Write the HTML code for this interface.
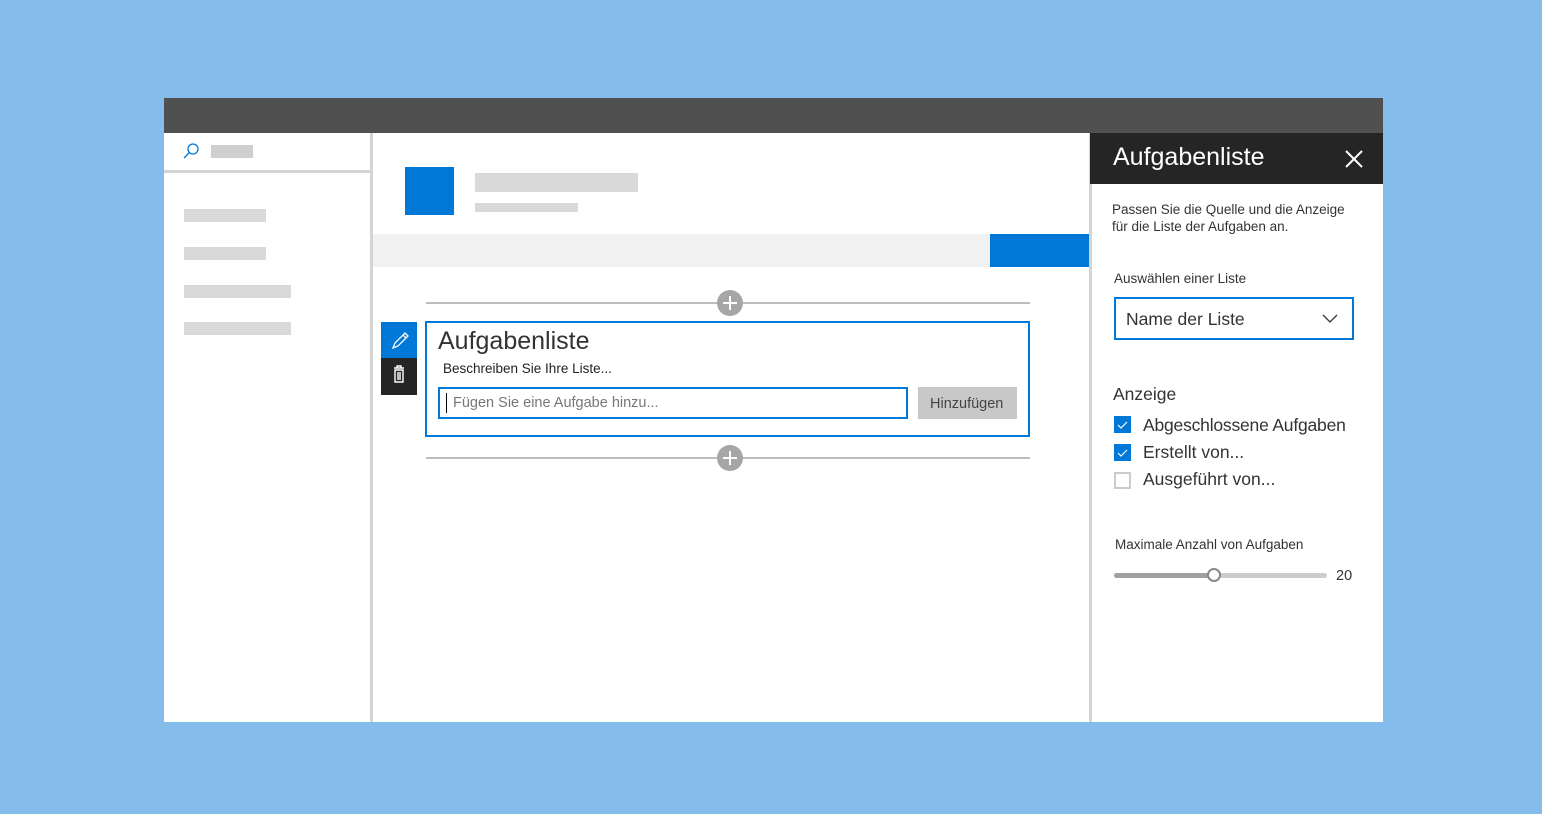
<!DOCTYPE html><html><head><style>
*{margin:0;padding:0;box-sizing:border-box}
body{width:1542px;height:814px;background:#84bdeb;position:relative;overflow:hidden;font-family:"Liberation Sans",sans-serif}
.a{position:absolute}
.g{background:#d9d9d9;position:absolute}
.t{position:absolute;white-space:nowrap}
</style></head><body>
<div class="a" style="left:164px;top:98px;width:1219px;height:624px;background:#fff"></div>
<div class="a" style="left:164px;top:98px;width:1219px;height:35px;background:#505050"></div>
<div class="a" style="left:370px;top:133px;width:3px;height:589px;background:#d4d4d4"></div>
<div class="a" style="left:164px;top:170px;width:206px;height:3px;background:#d4d4d4"></div>
<svg class="a" style="left:182px;top:141px" width="20" height="20"><circle cx="11" cy="8" r="5" fill="none" stroke="#0078d7" stroke-width="1.3"/><line x1="7.5" y1="11.5" x2="2" y2="17" stroke="#0078d7" stroke-width="1.3"/></svg>
<div class="a" style="left:211px;top:145px;width:42px;height:13px;background:#cfcfcf"></div>
<div class="g" style="left:184px;top:209px;width:82px;height:13px"></div>
<div class="g" style="left:184px;top:247px;width:82px;height:13px"></div>
<div class="g" style="left:184px;top:285px;width:107px;height:13px"></div>
<div class="g" style="left:184px;top:322px;width:107px;height:13px"></div>
<div class="a" style="left:405px;top:167px;width:49px;height:48px;background:#0078d7"></div>
<div class="g" style="left:475px;top:173px;width:163px;height:19px"></div>
<div class="g" style="left:475px;top:203px;width:103px;height:9px"></div>
<div class="a" style="left:373px;top:234px;width:617px;height:33px;background:#f1f1f1"></div>
<div class="a" style="left:990px;top:234px;width:99px;height:33px;background:#0078d7"></div>
<div class="a" style="left:426px;top:302px;width:604px;height:2px;background:#bdbdbd"></div>
<div class="a" style="left:426px;top:457px;width:604px;height:2px;background:#bdbdbd"></div>
<svg class="a" style="left:716px;top:289px" width="28" height="28"><circle cx="14" cy="14" r="13" fill="#a6a6a6"/><path d="M14 7v14M7 14h14" stroke="#fff" stroke-width="2"/></svg>
<svg class="a" style="left:716px;top:444px" width="28" height="28"><circle cx="14" cy="14" r="13" fill="#a6a6a6"/><path d="M14 7v14M7 14h14" stroke="#fff" stroke-width="2"/></svg>
<div class="a" style="left:381px;top:322px;width:36px;height:36px;background:#0078d7"></div>
<div class="a" style="left:381px;top:358px;width:36px;height:37px;background:#252525"></div>
<svg class="a" style="left:381px;top:322px" width="36" height="73"><path d="M12 26l2-5 10-10 3 3-10 10z M22 13l3 3" fill="none" stroke="#fff" stroke-width="1.3"/><path d="M13 46h10M16 46v-2h4v2M14 48h8v12h-8z M17 50v8M19 50v8" fill="none" stroke="#fff" stroke-width="1.4"/></svg>
<div class="a" style="left:425px;top:321px;width:605px;height:116px;border:2px solid #0078d7"></div>
<div class="t" style="left:438px;top:327px;font-size:25px;color:#333">Aufgabenliste</div>
<div class="t" style="left:443px;top:361px;font-size:13.5px;color:#222">Beschreiben Sie Ihre Liste...</div>
<div class="a" style="left:438px;top:387px;width:470px;height:32px;border:2px solid #0078d7"></div>
<div class="a" style="left:446px;top:393px;width:1px;height:20px;background:#000"></div>
<div class="t" style="left:453px;top:395px;font-size:14.5px;color:#777">Fügen Sie eine Aufgabe hinzu...</div>
<div class="a" style="left:918px;top:387px;width:99px;height:32px;background:#c8c8c8"></div>
<div class="t" style="left:930px;top:396px;font-size:14.5px;color:#444">Hinzufügen</div>
<div class="a" style="left:1089px;top:133px;width:3px;height:589px;background:#d4d4d4"></div>
<div class="a" style="left:1090px;top:133px;width:293px;height:51px;background:#252525"></div>
<div class="t" style="left:1113px;top:143px;font-size:25px;color:#fff">Aufgabenliste</div>
<svg class="a" style="left:1344px;top:149px" width="20" height="20"><path d="M2 2l16 16M18 2L2 18" stroke="#fff" stroke-width="2"/></svg>
<div class="t" style="left:1112px;top:201px;font-size:13.5px;line-height:17px;color:#333">Passen Sie die Quelle und die Anzeige<br>für die Liste der Aufgaben an.</div>
<div class="t" style="left:1114px;top:271px;font-size:13.5px;color:#333">Auswählen einer Liste</div>
<div class="a" style="left:1114px;top:297px;width:240px;height:43px;border:2px solid #0078d7"></div>
<div class="t" style="left:1126px;top:309px;font-size:17.5px;color:#333">Name der Liste</div>
<svg class="a" style="left:1322px;top:313px" width="16" height="10"><path d="M1 2l7 7 7-7" fill="none" stroke="#333" stroke-width="1.3"/></svg>
<div class="t" style="left:1113px;top:384px;font-size:17.5px;color:#333">Anzeige</div>
<div class="a" style="left:1114px;top:416px;width:17px;height:17px;background:#0078d7"></div>
<div class="a" style="left:1114px;top:444px;width:17px;height:17px;background:#0078d7"></div>
<svg class="a" style="left:1114px;top:416px" width="17" height="45"><path d="M4 9l3 3 6-6M4 37l3 3 6-6" fill="none" stroke="#fff" stroke-width="1.2"/></svg>
<div class="a" style="left:1114px;top:472px;width:17px;height:17px;border:2px solid #ccc"></div>
<div class="t" style="left:1143px;top:415px;font-size:17.5px;color:#333;letter-spacing:-0.2px">Abgeschlossene Aufgaben</div>
<div class="t" style="left:1143px;top:442px;font-size:17.5px;color:#333">Erstellt von...</div>
<div class="t" style="left:1143px;top:469px;font-size:17.5px;color:#333">Ausgeführt von...</div>
<div class="t" style="left:1115px;top:537px;font-size:13.5px;color:#333">Maximale Anzahl von Aufgaben</div>
<div class="a" style="left:1114px;top:573px;width:213px;height:5px;border-radius:3px;background:#ccc"></div>
<div class="a" style="left:1114px;top:573px;width:100px;height:5px;border-radius:3px;background:#a0a0a0"></div>
<div class="a" style="left:1207px;top:568px;width:14px;height:14px;border-radius:50%;background:#fff;border:2px solid #888"></div>
<div class="t" style="left:1336px;top:568px;font-size:14.5px;color:#333">20</div>
</body></html>
